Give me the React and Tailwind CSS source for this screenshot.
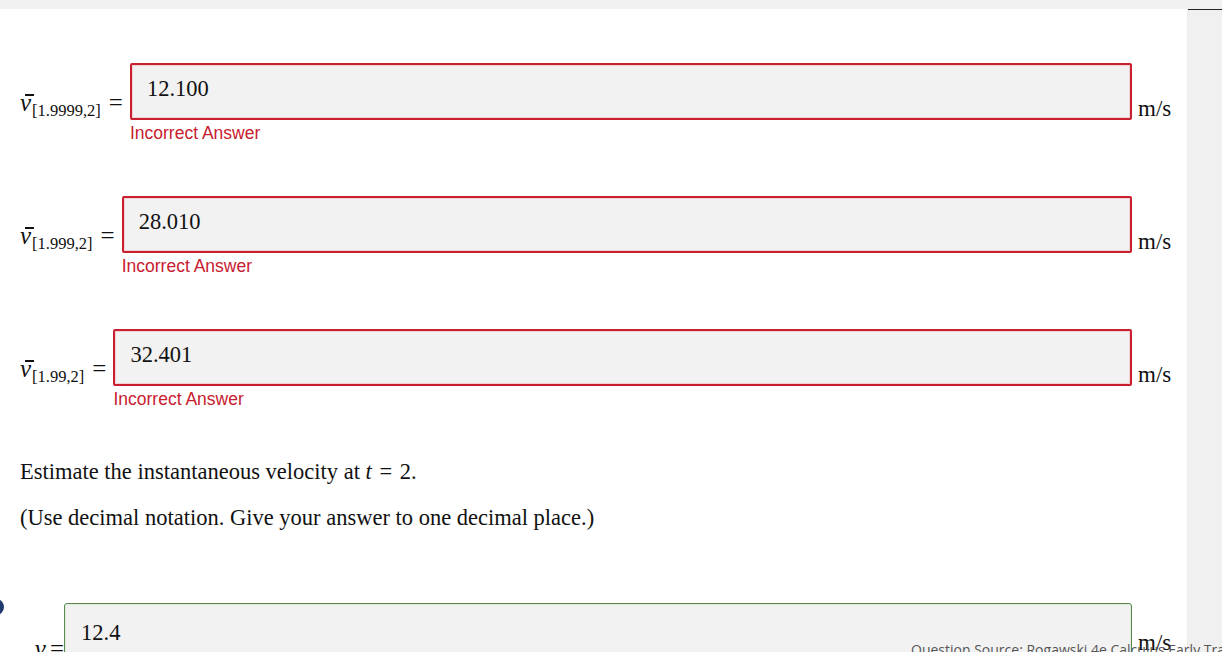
import React from 'react';

const SERIF = { fontFamily: '"Liberation Serif", "Times New Roman", serif' };

const ROWS = [
  { sub: '[1.9999,2]', value: '12.100' },
  { sub: '[1.999,2]', value: '28.010' },
  { sub: '[1.99,2]', value: '32.401' },
];

function VBar({ sub }) {
  return (
    <span className="inline-flex items-baseline text-[#111]" style={SERIF}>
      <span className="relative italic text-[25px] leading-none">
        v
        <span className="absolute left-[5px] top-[4px] w-[9px] h-[1.5px] bg-[#111]" />
      </span>
      <span className="text-[16.5px] relative top-[5px] ml-[1px]">{sub}</span>
      <span className="text-[25px] leading-none ml-[8px]">=</span>
    </span>
  );
}

function AnswerRow({ sub, value }) {
  return (
    <div className="flex items-start">
      <div className="h-[57px] flex items-end pb-[1px]">
        <VBar sub={sub} />
      </div>
      <div className="flex-1 ml-[7px]">
        <div className="h-[57px] rounded-[2px] border-2 border-[#c8202f] bg-[#f2f2f2] shadow-[inset_0_0_0_1px_#f3d0d3] flex items-center pl-[15px] pb-[5px]">
          <span className="text-[22.5px] text-[#111]" style={SERIF}>{value}</span>
        </div>
        <div className="mt-[2px] text-[17.5px] leading-[22px] text-[#c8202f]" style={{ fontFamily: '"Liberation Sans", Arial, sans-serif' }}>
          Incorrect Answer
        </div>
      </div>
      <div className="h-[57px] flex items-end pl-[6px] w-[55px]">
        <span className="text-[23px] leading-[28px] text-[#111] relative top-[3px]" style={SERIF}>m/s</span>
      </div>
    </div>
  );
}

export default function App() {
  return (
    <div className="relative w-[1222px] h-[652px] overflow-hidden bg-white flex flex-col">
      <div className="h-[9px] bg-[#f1f1f1] shrink-0" />
      <div className="flex flex-1 min-h-0">
        {/* main content */}
        <div className="relative w-[1188px] overflow-hidden pl-[20px] pt-[54px] border-r border-[#ececec]">
          <div className="space-y-[52px]">
            {ROWS.map((r) => (
              <AnswerRow key={r.sub} {...r} />
            ))}
          </div>

          <div className="mt-[47px] text-[22.5px] leading-[30px] text-[#111]" style={SERIF}>
            Estimate the instantaneous velocity at <span className="italic">t</span> <span className="mx-[2px]">=</span> 2.
          </div>
          <div className="mt-[16px] text-[22.5px] leading-[30px] text-[#111]" style={SERIF}>
            (Use decimal notation. Give your answer to one decimal place.)
          </div>

          {/* last answer, cut off at the bottom */}
          <div className="mt-[70px] flex items-start">
            <div className="h-[57px] w-[44px] flex items-end justify-end">
              <span className="text-[#111] relative top-[1px] leading-none" style={SERIF}>
                <span className="italic text-[25px]">v</span>
                <span className="text-[25px] ml-[4px]">=</span>
              </span>
            </div>
            <div className="flex-1 h-[57px] rounded-[3px] border border-[#5c8a4c] bg-[#f2f2f2] shadow-[inset_0_0_0_1px_#e2eadf] flex items-center pl-[16px] pt-[2px]">
              <span className="text-[22.5px] text-[#111]" style={SERIF}>12.4</span>
            </div>
            <div className="w-[55px] h-[57px] flex items-end pl-[6px]">
              <span className="text-[23px] leading-none text-[#111] relative top-[-6px]" style={SERIF}>m/s</span>
            </div>
          </div>

          <div className="absolute left-[-12px] top-[590px] w-[16px] h-[16px] rounded-full bg-[#1f3a6e]" />
        </div>

        {/* right scrollbar panel */}
        <div className="flex-1 bg-[#f0f0f0] border-t border-[#222]" />
      </div>

      {/* footer caption overlapping the last row */}
      <div
        className="absolute left-[911px] top-[640px] whitespace-nowrap text-[14px] leading-[20px] text-[#555]"
        style={{ fontFamily: '"Open Sans", "Noto Sans", sans-serif' }}
      >
        Question Source: Rogawski 4e Calculus Early Transcendentals
      </div>
    </div>
  );
}
